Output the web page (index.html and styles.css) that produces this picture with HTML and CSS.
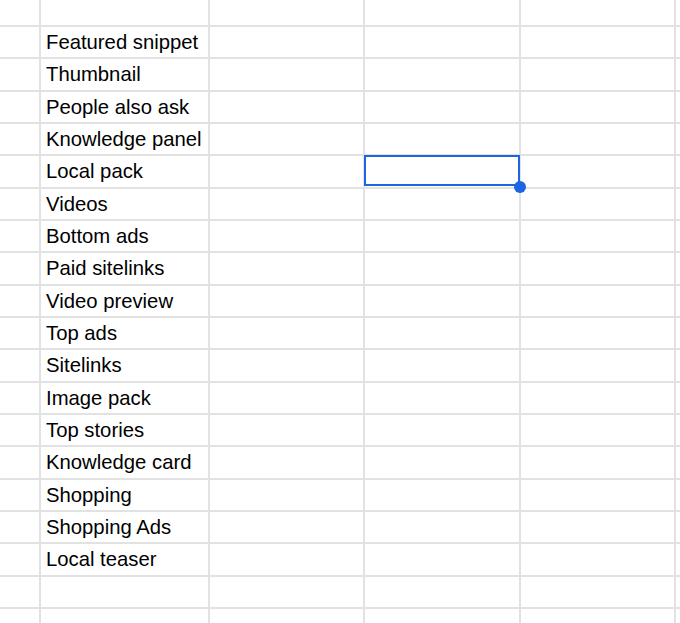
FILE: index.html
```html
<!DOCTYPE html>
<html>
<head>
<meta charset="utf-8">
<link rel="stylesheet" href="styles.css">
</head>
<body>
<div class="sheet">
  <div class="row top"><div class="c c0"></div><div class="c c1"></div><div class="c c2"></div><div class="c c3"></div><div class="c c4"></div><div class="c c5"></div></div>
  <div class="row"><div class="c c0"></div><div class="c c1">Featured snippet</div><div class="c c2"></div><div class="c c3"></div><div class="c c4"></div><div class="c c5"></div></div>
  <div class="row"><div class="c c0"></div><div class="c c1">Thumbnail</div><div class="c c2"></div><div class="c c3"></div><div class="c c4"></div><div class="c c5"></div></div>
  <div class="row"><div class="c c0"></div><div class="c c1">People also ask</div><div class="c c2"></div><div class="c c3"></div><div class="c c4"></div><div class="c c5"></div></div>
  <div class="row"><div class="c c0"></div><div class="c c1">Knowledge panel</div><div class="c c2"></div><div class="c c3"></div><div class="c c4"></div><div class="c c5"></div></div>
  <div class="row"><div class="c c0"></div><div class="c c1">Local pack</div><div class="c c2"></div><div class="c c3 selected"><span class="sel-box"></span><span class="sel-handle"></span></div><div class="c c4"></div><div class="c c5"></div></div>
  <div class="row"><div class="c c0"></div><div class="c c1">Videos</div><div class="c c2"></div><div class="c c3"></div><div class="c c4"></div><div class="c c5"></div></div>
  <div class="row"><div class="c c0"></div><div class="c c1">Bottom ads</div><div class="c c2"></div><div class="c c3"></div><div class="c c4"></div><div class="c c5"></div></div>
  <div class="row"><div class="c c0"></div><div class="c c1">Paid sitelinks</div><div class="c c2"></div><div class="c c3"></div><div class="c c4"></div><div class="c c5"></div></div>
  <div class="row"><div class="c c0"></div><div class="c c1">Video preview</div><div class="c c2"></div><div class="c c3"></div><div class="c c4"></div><div class="c c5"></div></div>
  <div class="row"><div class="c c0"></div><div class="c c1">Top ads</div><div class="c c2"></div><div class="c c3"></div><div class="c c4"></div><div class="c c5"></div></div>
  <div class="row"><div class="c c0"></div><div class="c c1">Sitelinks</div><div class="c c2"></div><div class="c c3"></div><div class="c c4"></div><div class="c c5"></div></div>
  <div class="row"><div class="c c0"></div><div class="c c1">Image pack</div><div class="c c2"></div><div class="c c3"></div><div class="c c4"></div><div class="c c5"></div></div>
  <div class="row"><div class="c c0"></div><div class="c c1">Top stories</div><div class="c c2"></div><div class="c c3"></div><div class="c c4"></div><div class="c c5"></div></div>
  <div class="row"><div class="c c0"></div><div class="c c1">Knowledge card</div><div class="c c2"></div><div class="c c3"></div><div class="c c4"></div><div class="c c5"></div></div>
  <div class="row"><div class="c c0"></div><div class="c c1">Shopping</div><div class="c c2"></div><div class="c c3"></div><div class="c c4"></div><div class="c c5"></div></div>
  <div class="row"><div class="c c0"></div><div class="c c1">Shopping Ads</div><div class="c c2"></div><div class="c c3"></div><div class="c c4"></div><div class="c c5"></div></div>
  <div class="row"><div class="c c0"></div><div class="c c1">Local teaser</div><div class="c c2"></div><div class="c c3"></div><div class="c c4"></div><div class="c c5"></div></div>
  <div class="row"><div class="c c0"></div><div class="c c1"></div><div class="c c2"></div><div class="c c3"></div><div class="c c4"></div><div class="c c5"></div></div>
  <div class="row"><div class="c c0"></div><div class="c c1"></div><div class="c c2"></div><div class="c c3"></div><div class="c c4"></div><div class="c c5"></div></div>
</div>
</body>
</html>
```
FILE: styles.css
```css
html, body {
  margin: 0;
  padding: 0;
  background: #ffffff;
  overflow: hidden;
}

.sheet {
  display: flex;
  flex-direction: column;
  width: 680px;
  font-family: "Liberation Sans", Arial, Helvetica, sans-serif;
  font-size: 20.3px;
  color: #000000;
}

.row {
  display: grid;
  grid-template-columns: 41px 169px 155px 156px 155px 1fr;
  height: 32.33px;
  flex: 0 0 auto;
}

.row.top {
  height: 27px;
}

.c {
  box-sizing: border-box;
  border-right: 2px solid #e2e2e2;
  border-bottom: 2px solid #e2e2e2;
  display: flex;
  align-items: center;
  padding-left: 5px;
  padding-top: 1px;
  white-space: nowrap;
  overflow: visible;
  position: relative;
}

.c5 {
  border-right: none;
}

.sel-box {
  position: absolute;
  left: -1px;
  top: -1px;
  width: 156px;
  height: 31px;
  box-sizing: border-box;
  border: 2px solid #1a66e3;
  z-index: 2;
}

.sel-handle {
  position: absolute;
  left: 149px;
  top: 25px;
  width: 12px;
  height: 12px;
  border-radius: 50%;
  background: #1a66e3;
  z-index: 3;
}
```
